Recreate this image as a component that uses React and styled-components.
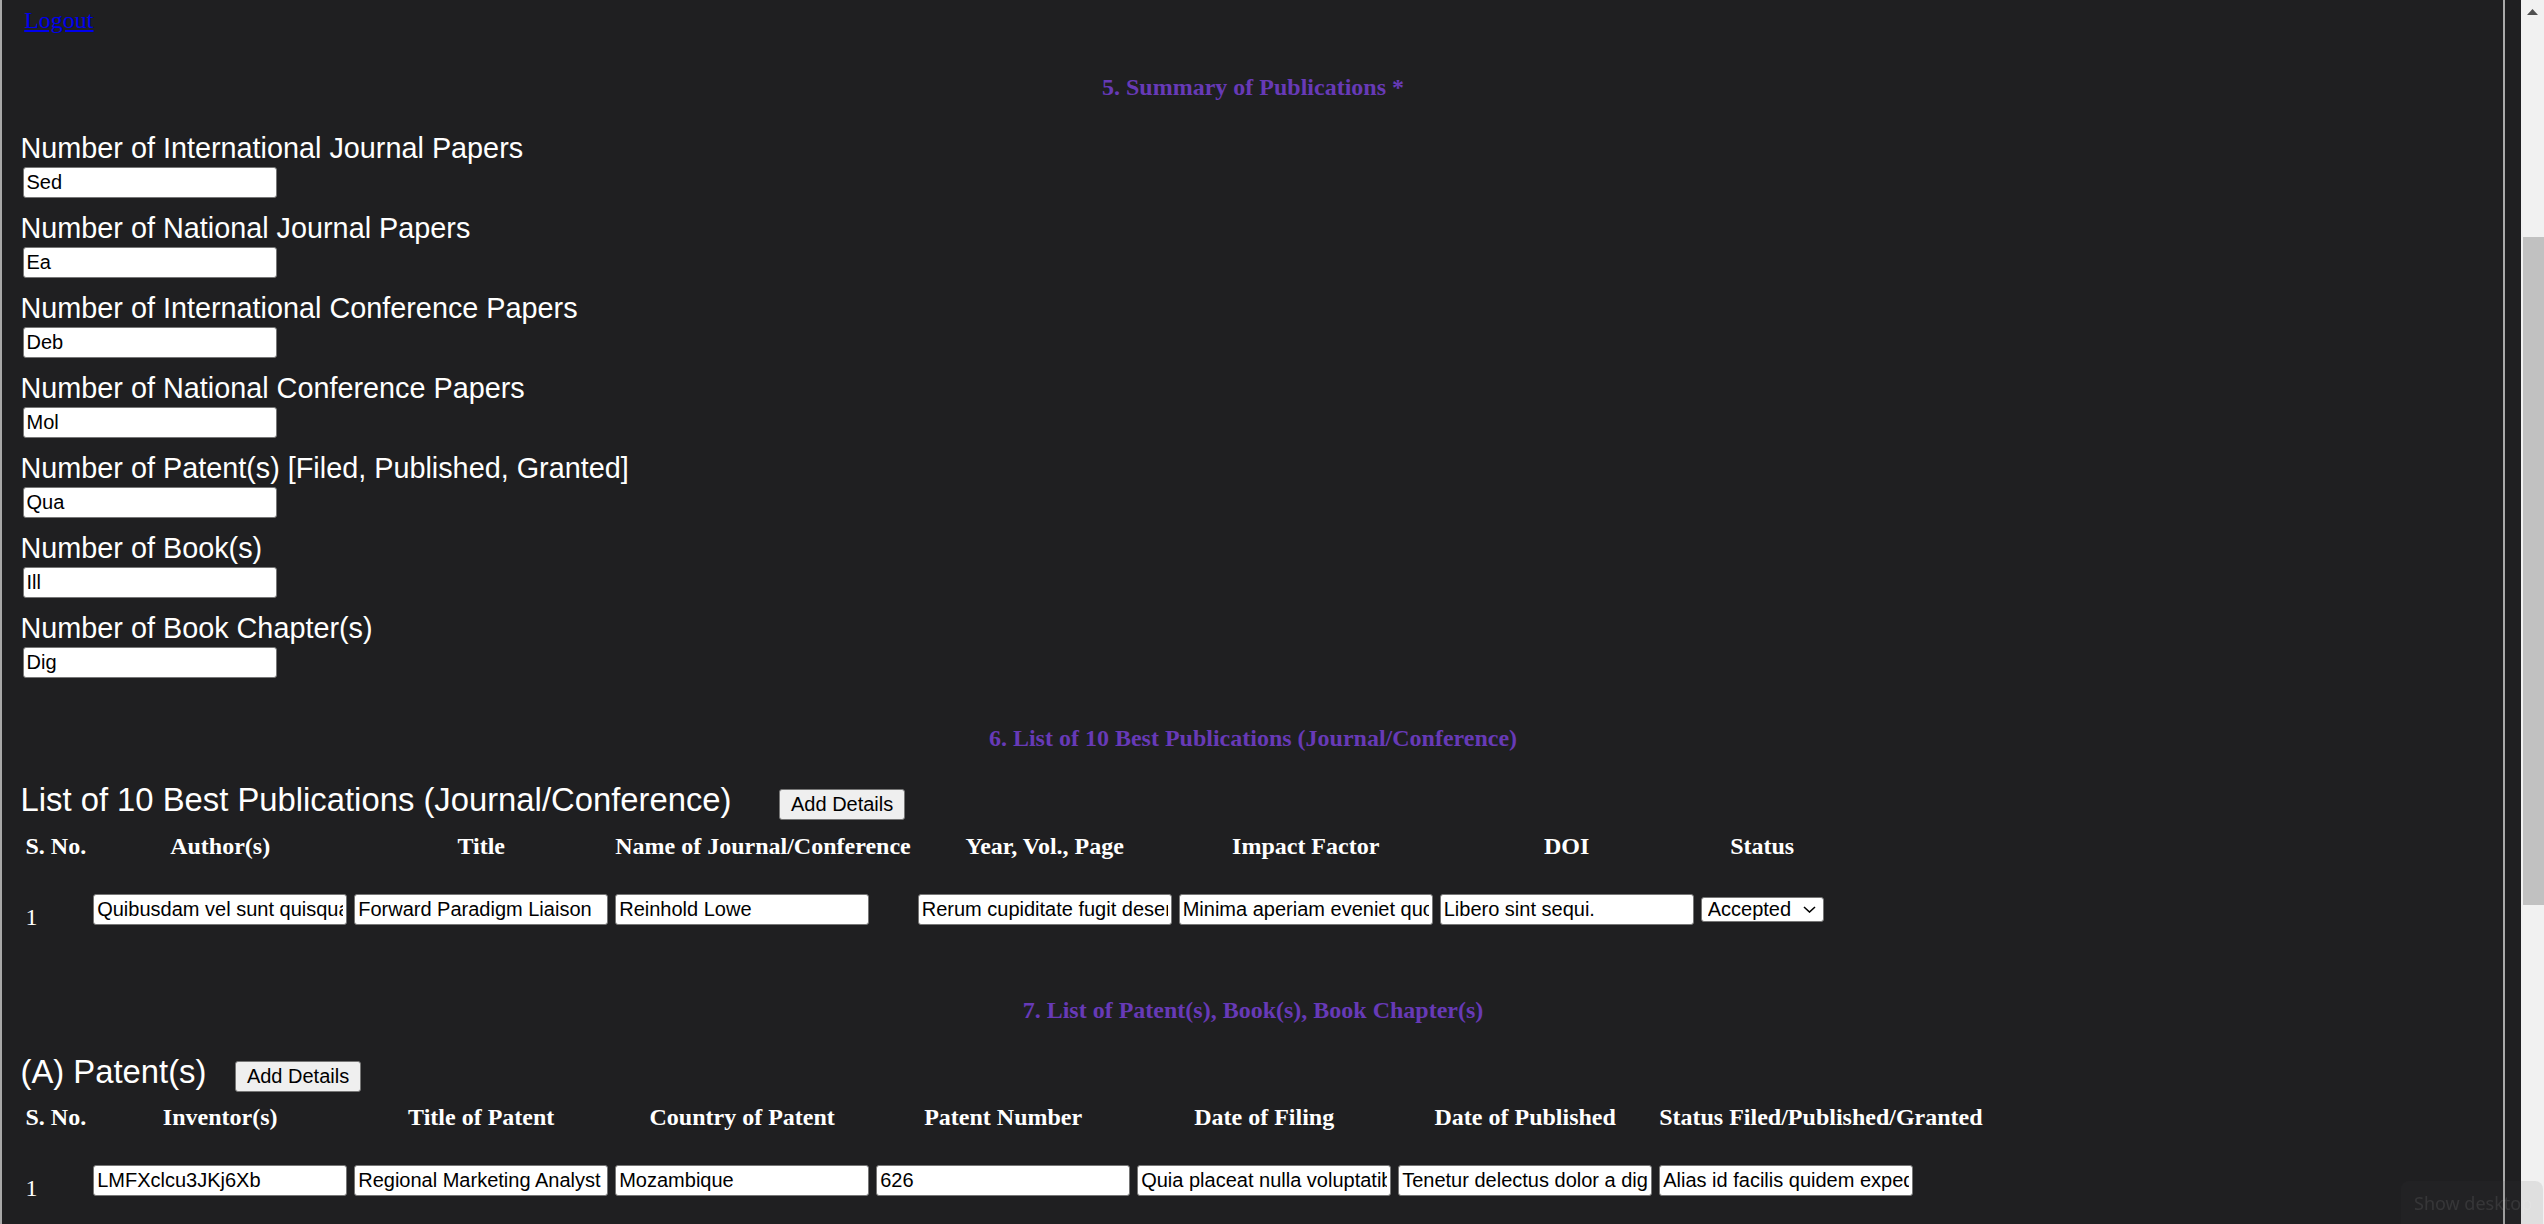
import React from "react";
import styled, { createGlobalStyle } from "styled-components";

const GlobalStyle = createGlobalStyle`
  html, body {
    margin: 0;
    padding: 0;
    height: 100vh;
    background: #1f1f21;
    overflow: hidden;
  }
  #root {
    height: 100vh;
    overflow: hidden;
  }
`;

const Screen = styled.div`
  display: flex;
  height: 100vh;
  background: #1f1f21;
  overflow: hidden;
`;

const Page = styled.main`
  flex: 1;
  min-width: 0;
  border-left: 2px solid #a8a8a8;
  border-right: 2px solid #a9a9a9;
  padding: 0 17.5px 0 18.5px;
  color: #fff;
  font-family: "Liberation Serif", "Times New Roman", serif;
  font-size: 24px;
`;

const Gutter = styled.div`
  flex: none;
  width: 16px;
`;

const ScrollTrack = styled.aside`
  flex: none;
  width: 23px;
  background: #f1f1f1;
  display: flex;
  flex-direction: column;
`;

const ScrollArrow = styled.svg`
  display: block;
  margin: 9px 0 0 6px;
`;

const ScrollThumb = styled.div`
  margin: 222px 0 0 2px;
  height: 668px;
  background: #c1c1c1;
`;

const TopBar = styled.div`
  padding: 6.7px 0 0 3.7px;
  line-height: 27px;
`;

const LogoutLink = styled.a`
  color: #0000ee;
  text-decoration: underline;
`;

const SectionTitle = styled.h4`
  margin: ${(p) => p.$top}px 0 0;
  text-align: center;
  font-weight: bold;
  font-size: 24px;
  line-height: 28px;
  color: #673ab7;
`;

const FieldList = styled.div`
  margin-top: 30.8px;
  display: flex;
  flex-direction: column;
`;

const Field = styled.div`
  display: flex;
  flex-direction: column;
  align-items: flex-start;
`;

const Label = styled.label`
  font-family: "Liberation Sans", Arial, sans-serif;
  font-size: 28.8px;
  line-height: 33px;
  color: #fff;
`;

const TextInput = styled.input`
  display: block;
  box-sizing: border-box;
  width: 254px;
  height: 31px;
  margin: ${(p) => (p.$cell ? "0 0 15px" : "2px 0 14px 2px")};
  padding: 0 3px;
  border: 1.5px solid #767676;
  border-radius: 3px;
  background: #fff;
  color: #000;
  font-family: "Liberation Sans", Arial, sans-serif;
  font-size: 20px;
  outline: none;
`;

const ListHeader = styled.div`
  display: flex;
  align-items: baseline;
  margin-top: 30.5px;
`;

const SubTitle = styled.h3`
  margin: 0;
  font-family: "Liberation Sans", Arial, sans-serif;
  font-weight: normal;
  font-size: 32.8px;
  line-height: 36px;
  color: #fff;
`;

const AddButton = styled.button`
  box-sizing: border-box;
  height: 31.4px;
  margin-left: ${(p) => p.$offset}px;
  padding: 0 10.5px;
  border: 1.5px solid #767676;
  border-radius: 3px;
  background: #efefef;
  color: #000;
  font-family: "Liberation Sans", Arial, sans-serif;
  font-size: 20px;
  line-height: 28.4px;
`;

const DataTable = styled.table`
  margin-top: 11.3px;
  border-collapse: separate;
  border-spacing: 3px 0;
  color: #fff;
  font-size: 24px;
`;

const HeadCell = styled.th`
  padding: 0 2px 34px;
  font-weight: bold;
  line-height: 28px;
  text-align: center;
  vertical-align: top;
  white-space: nowrap;
`;

const Cell = styled.td`
  padding: 0 2px;
  line-height: 28px;
  text-align: left;
  vertical-align: middle;
`;

const SelectWrap = styled.div`
  position: relative;
  width: 123px;
  margin-bottom: 15px;
`;

const StatusSelect = styled.select`
  appearance: none;
  display: block;
  box-sizing: border-box;
  width: 100%;
  height: 25px;
  padding: 0 0 0 6px;
  border: 1.5px solid #767676;
  border-radius: 3px;
  background: #fff;
  color: #000;
  font-family: "Liberation Sans", Arial, sans-serif;
  font-size: 20px;
`;

const Chevron = styled.svg`
  position: absolute;
  right: 8px;
  top: 9px;
  pointer-events: none;
`;

const Tooltip = styled.div`
  position: fixed;
  right: 1px;
  bottom: 0;
  width: 142px;
  height: 43px;
  box-sizing: border-box;
  padding-left: 13px;
  display: flex;
  align-items: center;
  border-radius: 8px 8px 0 0;
  background: rgba(71, 71, 71, 0.1);
  color: rgba(255, 255, 255, 0.09);
  font-family: "Noto Sans", "Open Sans", sans-serif;
  font-size: 18px;
`;

const summary = [
  ["Number of International Journal Papers", "Sed"],
  ["Number of National Journal Papers", "Ea"],
  ["Number of International Conference Papers", "Deb"],
  ["Number of National Conference Papers", "Mol"],
  ["Number of Patent(s) [Filed, Published, Granted]", "Qua"],
  ["Number of Book(s)", "Ill"],
  ["Number of Book Chapter(s)", "Dig"],
];

const pubHeads = [
  "S. No.",
  "Author(s)",
  "Title",
  "Name of Journal/Conference",
  "Year, Vol., Page",
  "Impact Factor",
  "DOI",
  "Status",
];

const pubRow = [
  "Quibusdam vel sunt quisquam",
  "Forward Paradigm Liaison",
  "Reinhold Lowe",
  "Rerum cupiditate fugit deserunt",
  "Minima aperiam eveniet quo",
  "Libero sint sequi.",
];

const patentHeads = [
  "S. No.",
  "Inventor(s)",
  "Title of Patent",
  "Country of Patent",
  "Patent Number",
  "Date of Filing",
  "Date of Published",
  "Status Filed/Published/Granted",
];

const patentRow = [
  "LMFXclcu3JKj6Xb",
  "Regional Marketing Analyst",
  "Mozambique",
  "626",
  "Quia placeat nulla voluptatibus",
  "Tenetur delectus dolor a dignissimos",
  "Alias id facilis quidem expedita",
];

function InputCells({ values }) {
  return values.map((v, i) => (
    <Cell key={i}>
      <TextInput $cell defaultValue={v} />
    </Cell>
  ));
}

export default function App() {
  return (
    <>
      <GlobalStyle />
      <Screen>
        <Page>
          <TopBar>
            <LogoutLink href="#">Logout</LogoutLink>
          </TopBar>

          <SectionTitle $top={39.3}>5. Summary of Publications *</SectionTitle>
          <FieldList>
            {summary.map(([label, value]) => (
              <Field key={label}>
                <Label>{label}</Label>
                <TextInput defaultValue={value} />
              </Field>
            ))}
          </FieldList>

          <SectionTitle $top={32.2}>
            6. List of 10 Best Publications (Journal/Conference)
          </SectionTitle>
          <ListHeader>
            <SubTitle>List of 10 Best Publications (Journal/Conference)</SubTitle>
            <AddButton $offset={48}>Add Details</AddButton>
          </ListHeader>
          <DataTable>
            <thead>
              <tr>
                {pubHeads.map((h) => (
                  <HeadCell key={h}>{h}</HeadCell>
                ))}
              </tr>
            </thead>
            <tbody>
              <tr>
                <Cell>1</Cell>
                <InputCells values={pubRow} />
                <Cell>
                  <SelectWrap>
                    <StatusSelect defaultValue="Accepted">
                      <option>Accepted</option>
                      <option>Published</option>
                      <option>Communicated</option>
                    </StatusSelect>
                    <Chevron width="13" height="7" viewBox="0 0 13 7">
                      <polyline
                        points="1,1 6.5,6 12,1"
                        fill="none"
                        stroke="#000"
                        strokeWidth="1.6"
                      />
                    </Chevron>
                  </SelectWrap>
                </Cell>
              </tr>
            </tbody>
          </DataTable>

          <SectionTitle $top={56.1}>
            7. List of Patent(s), Book(s), Book Chapter(s)
          </SectionTitle>
          <ListHeader>
            <SubTitle>(A) Patent(s)</SubTitle>
            <AddButton $offset={29}>Add Details</AddButton>
          </ListHeader>
          <DataTable>
            <thead>
              <tr>
                {patentHeads.map((h) => (
                  <HeadCell key={h}>{h}</HeadCell>
                ))}
              </tr>
            </thead>
            <tbody>
              <tr>
                <Cell>1</Cell>
                <InputCells values={patentRow} />
              </tr>
            </tbody>
          </DataTable>
        </Page>
        <Gutter />
        <ScrollTrack>
          <ScrollArrow width="11" height="6" viewBox="0 0 11 6">
            <polygon points="0,6 5.5,0 11,6" fill="#505050" />
          </ScrollArrow>
          <ScrollThumb />
        </ScrollTrack>
      </Screen>
      <Tooltip>Show desktop</Tooltip>
    </>
  );
}
